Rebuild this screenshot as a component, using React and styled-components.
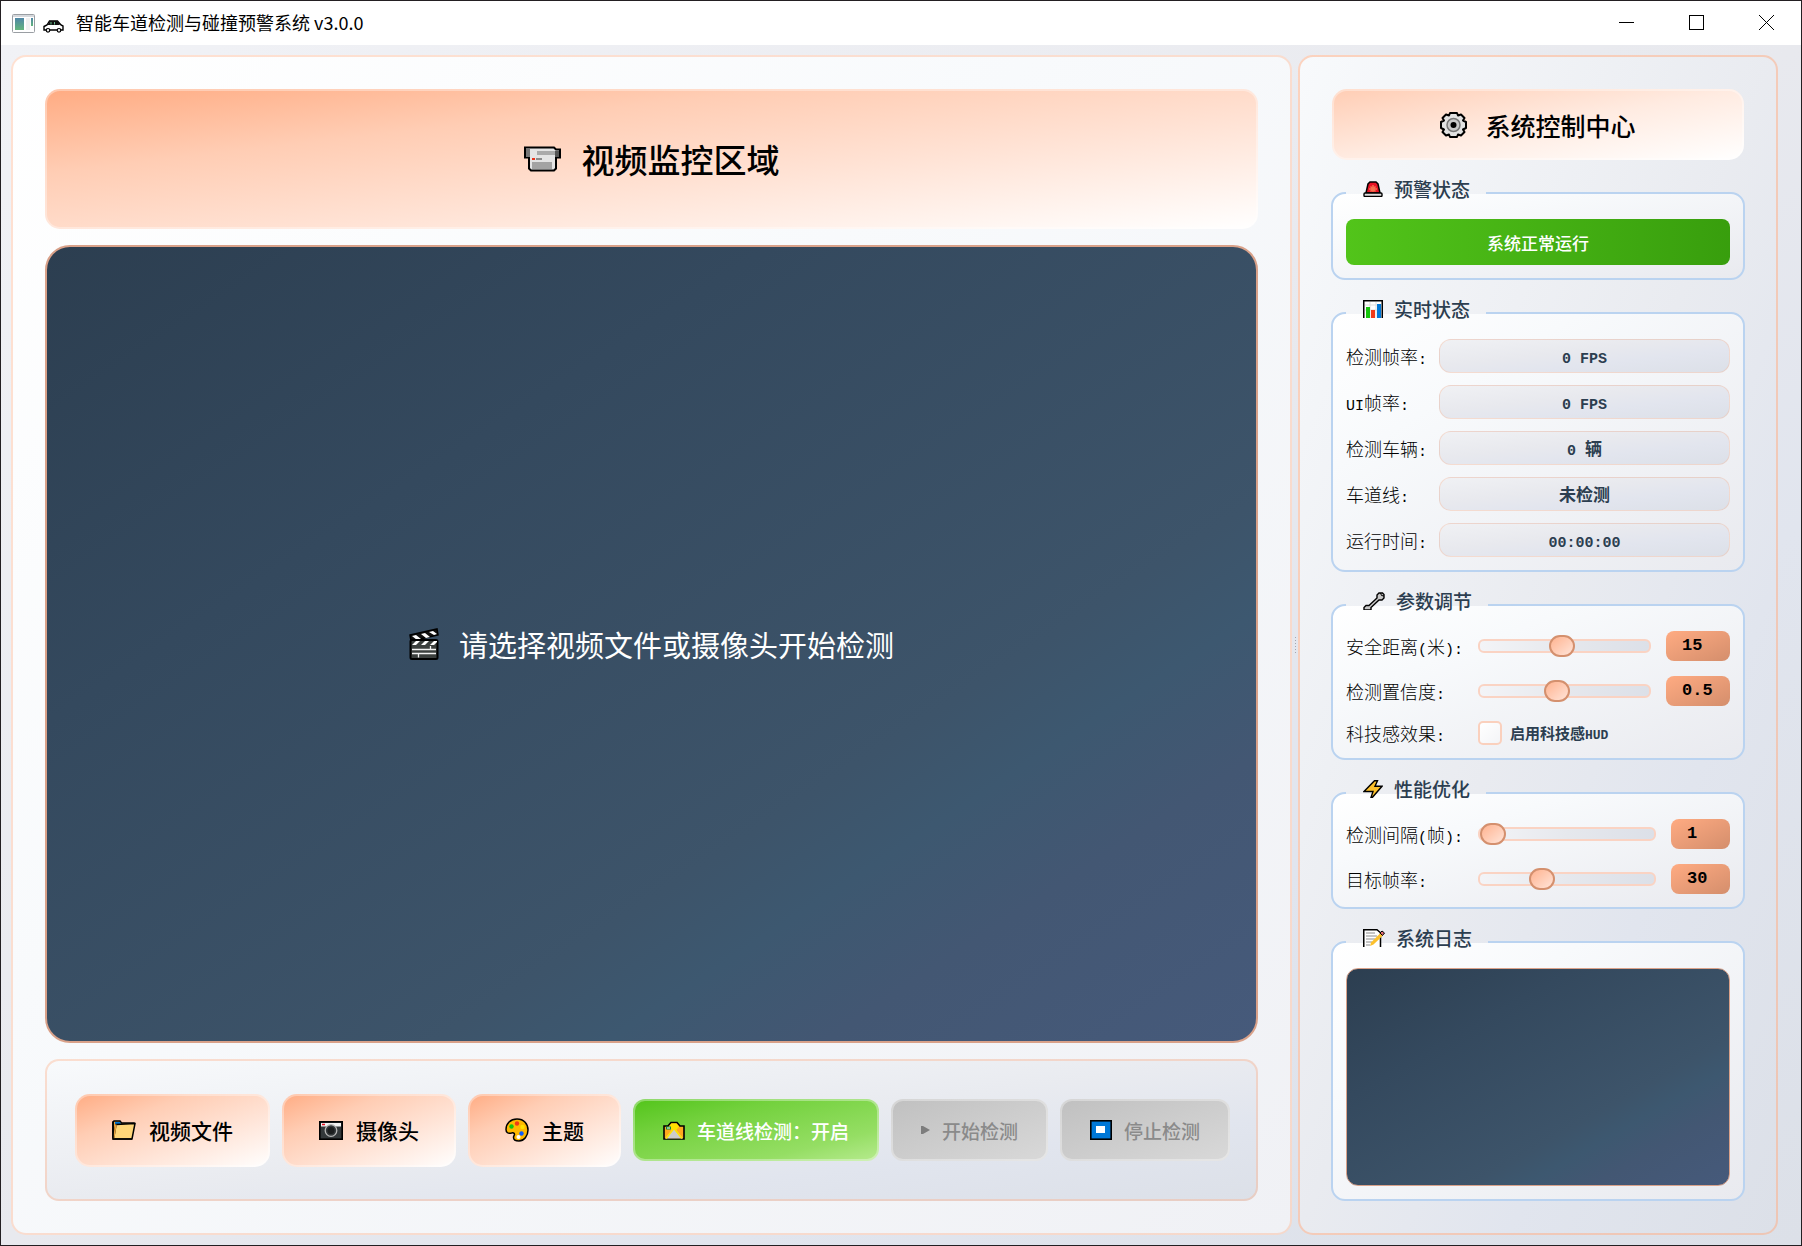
import React, { useState } from "react";
import styled, { createGlobalStyle, css } from "styled-components";

const PEACH = "#ffab82";
const INK = "#2c3e50";
const CJK = '"Noto Sans CJK SC", sans-serif';

const GlobalStyle = createGlobalStyle`
  *, *::before, *::after { box-sizing: border-box; }
  body { margin: 0; font-family: ${CJK}; color: #000; }
  button, input, output { font: inherit; color: inherit; }
`;

const Window = styled.div`
  display: flex;
  flex-direction: column;
  min-height: 100vh;
  border: 1px solid #231f22;
`;

const TitleBar = styled.header`
  display: flex;
  align-items: center;
  height: 44px;
  padding: 0 0 0 11px;
  background: #fff;
`;

const WindowTitle = styled.h1`
  flex: 1;
  margin: 0 0 0 12px;
  padding-bottom: 3px;
  font-size: 18px;
  line-height: 24px;
  font-weight: 400;
`;

const CarSlot = styled.span`
  display: flex;
  margin: 6px 0 0 8px;
`;

const WindowButton = styled.button`
  display: grid;
  place-items: center;
  width: 70px;
  height: 44px;
  padding: 0 0 2px;
  border: 0;
  background: transparent;
`;

const Body = styled.main`
  flex: 1;
  display: grid;
  grid-template-columns: minmax(0, 1fr) 6px 480px;
  padding: 10px 23px 10px 10px;
  background: linear-gradient(to bottom right, #f1f2f6 0%, #e8e9ee 50%, #e1e5ee 70%, #dce0e8 100%);
`;

const Panel = styled.section`
  display: flex;
  flex-direction: column;
  padding: 32px;
  border: 2px solid ${(p) => (p.$side ? "rgba(255,171,130,.5)" : "rgba(255,171,130,.36)")};
  border-radius: 15px;
  background: ${(p) =>
    p.$side
      ? "linear-gradient(to bottom right, #f8fafc 0%, #e9ebf0 50%, #e1e5ee 72%, #dce0e8 100%)"
      : "linear-gradient(to bottom right, #fff 0%, #f8fafc 40%, #f0f1f5 100%)"};
  background-origin: border-box;
`;

const Splitter = styled.div`
  display: flex;
  flex-direction: column;
  align-items: center;
  justify-content: center;
  gap: 2px;
`;

const Dot = styled.span`
  width: 1px;
  height: 1px;
  background: #a4a7b0;
`;

const Banner = styled.h2`
  display: flex;
  align-items: center;
  justify-content: center;
  margin: 0;
  border: 2px solid rgba(255, 255, 255, 0.35);
  border-radius: 15px;
  background-origin: border-box;
  ${(p) =>
    p.$large
      ? css`
          height: 140px;
          gap: 21px;
          font-size: 33px;
          font-weight: 500;
          background-image: linear-gradient(to bottom right, #ffab82 0%, #ffcdb4 30%, #ffe2d4 60%, #fff 100%);
        `
      : css`
          height: 71px;
          gap: 18px;
          font-size: 25px;
          font-weight: 500;
          background-image: linear-gradient(to bottom right, #ffcdb4 0%, #ffebe1 50%, #fff 100%);
        `}
`;

const darkSurface = css`
  background: linear-gradient(to bottom right, #2c3e50 0%, #34495e 30%, #3d546a 66%, #3d5870 73%, #435773 82%, #465a7b 100%);
  background-origin: border-box;
`;

const Screen = styled.div`
  flex: 1;
  display: flex;
  align-items: center;
  justify-content: center;
  gap: 20px;
  min-height: 300px;
  margin: 16px 0;
  border: 2px solid #d9a189;
  border-radius: 25px;
  color: #fff;
  font-size: 29px;
  font-weight: 400;
  ${darkSurface}
`;

const Toolbar = styled.div`
  display: flex;
  align-items: center;
  gap: 12px;
  height: 142px;
  padding: 0 28px;
  border: 2px solid rgba(255, 171, 130, 0.36);
  border-radius: 14px;
  background: linear-gradient(to bottom right, #f8fafc 0%, #e9ebf0 50%, #e1e5ee 72%, #dce0e8 100%);
  background-origin: border-box;
`;

const toolLooks = {
  file: css`
    gap: 13px;
    height: 73px;
    padding: 0 35px;
    border-radius: 15px;
    font-size: 21px;
    background-image: linear-gradient(to bottom right, #ffab82 0%, #ffcdb4 30%, #ffe2d4 60%, #fff 100%);
  `,
  on: css`
    color: #fff;
    background-image: linear-gradient(to bottom right, #52c41a 0%, #73d13d 30%, #95de64 75%, #b7eb8f 100%);
  `,
  off: css`
    color: #8a8a8a;
    background-image: linear-gradient(to bottom right, #c0c0c0, #d9d9d9);
  `,
};

const ToolButton = styled.button`
  flex: 1 1 auto;
  display: flex;
  align-items: center;
  justify-content: center;
  gap: 12px;
  height: 62px;
  padding: 0 28px;
  border: 2px solid rgba(255, 255, 255, 0.35);
  border-radius: 12px;
  background-origin: border-box;
  font-size: 19px;
  font-weight: 500;
  white-space: nowrap;
  ${(p) => toolLooks[p.$look]}
`;

const Group = styled.fieldset`
  display: flex;
  flex-direction: column;
  flex: ${(p) => (p.$fill ? "1" : "none")};
  gap: ${(p) => p.$gap || 0}px;
  min-width: 0;
  margin: 18px -1px 0;
  padding: 11px 13px 13px;
  border: 2px solid #bad3f0;
  border-radius: 14px;
  background: linear-gradient(to bottom right, #fff 0%, #f8fafc 30%, #e9eaef 100%);
`;

const Legend = styled.legend`
  height: 30px;
  padding: 0 16px 8px 17px;
  color: ${INK};
`;

const LegendRow = styled.span`
  display: flex;
  align-items: center;
  gap: 11px;
  font-size: 19px;
  line-height: 22px;
  font-weight: 500;
`;

const Alert = styled.div`
  display: grid;
  place-items: center;
  height: 46px;
  border-radius: 8px;
  background: linear-gradient(to right, #52c41a, #389e0d);
  color: #fff;
  font-size: 17px;
  font-weight: 500;
`;

const Latin = styled.span`
  font-family: "Liberation Mono", monospace;
  font-size: ${(p) => (p.$small ? 13 : 15)}px;
  line-height: 1;
  white-space: pre;
`;

const StatRow = styled.div`
  display: grid;
  grid-template-columns: 81px minmax(0, 1fr);
  gap: 12px;
  align-items: center;
`;

const Label = styled.label`
  font-size: 18px;
  line-height: 24px;
  font-weight: 300;
  white-space: nowrap;
`;

const Pill = styled.output`
  height: 34px;
  border: 1px solid rgba(255, 171, 130, 0.3);
  border-radius: 12px;
  background: linear-gradient(to bottom right, #f0f1f4 0%, #e8e9ee 40%, #e2e5ee 65%, #dce0e8 100%);
  color: ${INK};
  font-size: 17px;
  line-height: 32px;
  font-weight: 700;
  text-align: center;
`;

const ParamRow = styled.div`
  display: grid;
  grid-template-columns: 117px minmax(0, 1fr) auto;
  column-gap: 15px;
  align-items: center;
`;

const Slider = styled.input`
  appearance: none;
  width: 100%;
  height: 22px;
  margin: 0;
  background: transparent;

  &::-webkit-slider-runnable-track {
    height: 14px;
    border: 2px solid #fad3c3;
    border-radius: 6px;
    background: linear-gradient(to right, #f3f4f7, #e6e8ed 50%, #dce0e8);
  }

  &::-webkit-slider-thumb {
    appearance: none;
    width: 26px;
    height: 22px;
    margin-top: -6px;
    border: 2px solid #d4906e;
    border-radius: 11px;
    background: linear-gradient(to bottom right, #ffb390, #ffe4d8);
  }
`;

const Badge = styled.output`
  min-width: ${(p) => (p.$wide ? 64 : 59)}px;
  height: 30px;
  padding: 0 16px;
  border-radius: 8px;
  background: linear-gradient(to bottom right, ${PEACH}, #d48e6c);
  font-family: "Liberation Mono", monospace;
  font-size: 17px;
  line-height: 30px;
  font-weight: 700;
`;

const CheckLabel = styled.label`
  display: flex;
  align-items: center;
  gap: 8px;
  height: 24px;
  color: ${INK};
  font-size: 15px;
  line-height: 24px;
  font-weight: 700;
`;

const CheckBox = styled.input`
  appearance: none;
  width: 24px;
  height: 24px;
  margin: 0;
  border: 2px solid #fad0bd;
  border-radius: 5px;
  background: linear-gradient(to bottom right, #fff, #f3f4f7);

  &:checked { background: ${PEACH}; }
`;

const Log = styled.div`
  flex: 1;
  min-height: 120px;
  border: 1px solid #d9a189;
  border-radius: 12px;
  ${darkSurface}
`;

function Icon({ w, h, box, children }) {
  return (
    <svg width={w} height={h} viewBox={box || `0 0 ${w} ${h}`} fill="none" aria-hidden="true">
      {children}
    </svg>
  );
}

const AppIcon = () => (
  <Icon w={23} h={19}>
    <rect x=".5" y=".5" width="22" height="18" rx="1" fill="#fff" stroke="#9a9ea3" />
    <rect x="1" y="1" width="21" height="2" fill="#d5d8dc" />
    <rect x="3" y="4" width="9" height="12" fill="url(#appFill)" />
    <rect x="14" y="4" width="4" height="12" fill="#f0f0f0" />
    <rect x="19" y="4" width="2" height="8" fill="url(#appFill)" />
    <defs>
      <linearGradient id="appFill" x1="0" y1="0" x2="0" y2="1">
        <stop stopColor="#4f86a6" />
        <stop offset="1" stopColor="#63b57c" />
      </linearGradient>
    </defs>
  </Icon>
);

const CarIcon = () => (
  <Icon w={21} h={13}>
    <path d="M1 6.5 4 5l2.5-4h8L18 5l2 1v4H1z" fill="#fff" stroke="#000" strokeWidth="1.4" />
    <path d="M4.5 5 7 1h7.5L17 5z" fill="#111" />
    <path d="M8 2v2.5M11.5 2v2.5" stroke="#6b8" />
    <circle cx="5" cy="10.3" r="1.8" fill="#eee" stroke="#000" strokeWidth="1.2" />
    <circle cx="16" cy="10.3" r="1.8" fill="#eee" stroke="#000" strokeWidth="1.2" />
  </Icon>
);

const CamcorderIcon = () => (
  <Icon w={37} h={26}>
    <path d="M1 1.5h29l2 2h4v8h-4v11l-2 2H7l-2-2v-11H1z" fill="#e4e4e4" stroke="#000" strokeWidth="2" />
    <path d="M2 3h4v8H2z" fill="#777" />
    <path d="M31 5h4v6h-4z" fill="#555" />
    <path d="M13 5h18v4H13z" fill="#aaa" />
    <path d="M8 16h20v7H8z" fill="#a3a3a3" />
    <path d="M8 13h3" stroke="#e8331c" strokeWidth="2" />
    <path d="M12 13h6" stroke="#8b8b8b" strokeWidth="2" />
  </Icon>
);

const GearIcon = () => (
  <Icon w={27} h={26}>
    <path
      d="M10 1h7l1 2.500 3-1 3.500 3.500-1.500 2.500L26 10v6l-3 1.500 1.500 2.500-3.500 3.500-3-1L17 25h-7l-1-2.500-3 1L2.500 20 4 17.500 1 16v-6l3-1.500L2.500 6 6 2.500l3 1z"
      fill="#e2e2e2"
      stroke="#000"
      strokeWidth="2"
      strokeLinejoin="round"
    />
    <circle cx="13.500" cy="13" r="6.500" fill="#c9c9c9" stroke="#777" strokeWidth="1.500" />
    <circle cx="13.500" cy="13" r="3" fill="#000" />
  </Icon>
);

const SirenIcon = () => (
  <Icon w={20} h={16}>
    <path d="M3 12 5 3l2-2h6l2 2 2 9z" fill="#e81224" stroke="#000" strokeWidth="1.500" />
    <path d="M10 4v7M6 8h8M7.500 5.500l5 5M12.500 5.500l-5 5" stroke="#f5714f" strokeWidth="1.500" />
    <rect x="1" y="12" width="18" height="3.500" rx="1" fill="#ddd" stroke="#000" strokeWidth="1.400" />
  </Icon>
);

const ChartIcon = () => (
  <Icon w={20} h={18}>
    <path d="M.75 18V.75h18.500V18" fill="#fff" stroke="#000" strokeWidth="1.500" />
    <path d="M2 5h16M2 10h16M7 2v16M13 2v16" stroke="#ddd" />
    <path d="M3 7h4v11H3z" fill="#16c60c" />
    <path d="M8 10h4v8H8z" fill="#f03a17" />
    <path d="M14 4h4v14h-4z" fill="#0078d7" />
  </Icon>
);

const WrenchIcon = () => (
  <Icon w={22} h={18}>
    <path
      d="M1 18v-2.500l2-2h3l8-7.500V3L16 1h3.500L21 2.500V6l-2 2h-3l-8 7.500V18z"
      fill="#c8c8c8"
      stroke="#000"
      strokeWidth="1.400"
    />
    <path d="m17.500 1 1 2.500L21 4" stroke="#000" strokeWidth="1" />
  </Icon>
);

const BoltIcon = () => (
  <Icon w={20} h={18}>
    <path d="M11.500.7h3L12 6.300h7L9.500 17.300 8 17.500l2-6H1z" fill="#fcc02c" stroke="#000" strokeWidth="1.400" />
  </Icon>
);

const NoteIcon = () => (
  <Icon w={22} h={18}>
    <path d="M.75 18V.75H14l3.500 3V18" fill="#fff" stroke="#000" strokeWidth="1.500" />
    <path d="M3 4h9M3 7h11M3 10h9M3 13h6M3 16h4" stroke="#8c8c8c" />
    <path d="m7 17 1-3.500L17.500 4l2.500 2.500-9.500 9z" fill="#fcc02c" />
    <path d="m17 4 2-2 2.500 2-2 2.500z" fill="#e06a73" stroke="#000" />
  </Icon>
);

const ClapperIcon = () => (
  <Icon w={30} h={32}>
    <path d="m1 7 27-6 1 6L2 13z" fill="#111" stroke="#000" strokeWidth="1.500" />
    <path d="m3 8 5 4 4-1-5-4zM12 6l5 4 4-1-5-4zM20 4l5 3 3-1-4-3z" fill="#fff" />
    <rect x="1.500" y="12" width="27" height="19" rx="1.500" fill="#3b3f3d" stroke="#000" strokeWidth="2" />
    <path d="m3 17 4-4h4l-4 4zM12 17l4-4h4l-4 4zM21 17l4-4h3v1l-3 3z" fill="#fff" />
    <path d="M3 21.500h24M3 25.500h24M21.500 18v3.500M9.500 26v3.500" stroke="#f2f2f2" strokeWidth="1.300" />
  </Icon>
);

const FolderIcon = () => (
  <Icon w={24} h={20}>
    <path d="M1 18.500V2l1-1h6l1.500 2H22v2" fill="#e8a33d" stroke="#000" strokeWidth="1.600" />
    <path d="M3 2h5l1 2H3z" fill="#0078d7" />
    <path d="M4 4.500 23 3.500 20 19H1.500z" fill="#ffd679" stroke="#000" strokeWidth="1.500" />
    <path d="M4 4.500 1.500 19" stroke="#e8a33d" strokeWidth="1.500" />
    <path d="M1 1.500v17.500h19" stroke="#000" strokeWidth="1.600" />
  </Icon>
);

const CameraIcon = () => (
  <Icon w={24} h={19}>
    <rect x=".8" y=".8" width="22.400" height="17.400" fill="#33383a" stroke="#000" strokeWidth="1.600" />
    <path d="M2 2h20v3.500H2z" fill="#f2f2f2" />
    <path d="M3 3.500h3" stroke="#e81224" strokeWidth="1.500" />
    <circle cx="12" cy="9.500" r="5.800" fill="#33383a" stroke="#b5b5b5" strokeWidth="1.300" />
    <circle cx="12" cy="9.500" r="3.500" fill="#1b1d1e" />
  </Icon>
);

const PaletteIcon = () => (
  <Icon w={24} h={24}>
    <path
      d="M12 1c7 0 11 5 11 11 0 6-4 11-9 11-3.500 0-5.500-1.500-5.500-3.500 0-1.500 1-2 1-3.200C9.500 15 8 14.500 6.500 15 3 16 1 14.500 1 11.500 1 5.500 5.500 1 12 1z"
      fill="#ffb900"
      stroke="#000"
      strokeWidth="1.500"
    />
    <circle cx="6.500" cy="8.500" r="2.200" fill="#16c60c" />
    <circle cx="12" cy="5.500" r="2.200" fill="#f03a17" />
    <circle cx="17.500" cy="9" r="2.200" fill="#ffe100" />
    <circle cx="16.500" cy="15.500" r="2.200" fill="#0b5cff" />
    <circle cx="13.500" cy="19" r="2" fill="#fff" />
  </Icon>
);

const RoadIcon = () => (
  <Icon w={22} h={19}>
    <path d="M1 18V5h4l3-3.500h6L17 5h4v13z" fill="#ffa91f" stroke="#000" strokeWidth="1.600" />
    <path d="M6 5.500 8.500 2.500h5L16 5.500l-3 4H9z" fill="#ffe100" />
    <path d="M2 17.500 9 9h4l7 8.500z" fill="#ccc" />
    <path d="M3 17.500 10.500 8M19 17.500 11.500 8" stroke="#ffe100" strokeWidth="1.600" />
    <path d="M3 7h5" stroke="#10893e" strokeWidth="3" />
    <path d="M4 7h3" stroke="#fff" />
  </Icon>
);

const PlayIcon = () => (
  <Icon w={9} h={8}>
    <path d="M0 0h2l7 4-7 4H0z" fill="#7d7d7d" />
  </Icon>
);

const StopIcon = () => (
  <Icon w={22} h={20}>
    <rect x=".8" y=".8" width="20.400" height="18.400" fill="#0078d7" stroke="#000" strokeWidth="1.600" />
    <rect x="6" y="6" width="9" height="7" fill="#fff" />
  </Icon>
);

/* Half-width runs are set in the monospaced face, Chinese runs in the page face. */
function Mixed({ small, children }) {
  return children
    .split(/([\x20-\x7e]+)/)
    .filter(Boolean)
    .map((part, i) =>
      /^[\x20-\x7e]/.test(part) ? (
        <Latin key={i} $small={small}>
          {part}
        </Latin>
      ) : (
        part
      )
    );
}

function Box({ icon, title, gap, fill, children }) {
  return (
    <Group $gap={gap} $fill={fill}>
      <Legend>
        <LegendRow>
          {icon}
          {title}
        </LegendRow>
      </Legend>
      {children}
    </Group>
  );
}

function Param({ id, label, min, max, step = 1, initial, wide }) {
  const [value, setValue] = useState(initial);
  return (
    <ParamRow>
      <Label htmlFor={id}>
        <Mixed>{label}</Mixed>
      </Label>
      <Slider id={id} type="range" min={min} max={max} step={step} value={value} onChange={(e) => setValue(e.target.value)} />
      <Badge htmlFor={id} $wide={wide}>
        {value}
      </Badge>
    </ParamRow>
  );
}

const stats = [
  ["fps", "检测帧率:", "0 FPS"],
  ["ui-fps", "UI帧率:", "0 FPS"],
  ["vehicles", "检测车辆:", "0 辆"],
  ["lane", "车道线:", "未检测"],
  ["uptime", "运行时间:", "00:00:00"],
];

export default function App() {
  return (
    <Window>
      <GlobalStyle />
      <TitleBar>
        <AppIcon />
        <CarSlot>
          <CarIcon />
        </CarSlot>
        <WindowTitle>智能车道检测与碰撞预警系统 v3.0.0</WindowTitle>
        <WindowButton aria-label="最小化">
          <Icon w={15} h={15}>
            <path d="M0 7.500h15" stroke="#000" />
          </Icon>
        </WindowButton>
        <WindowButton aria-label="最大化">
          <Icon w={15} h={15}>
            <rect x=".5" y=".5" width="14" height="14" stroke="#000" />
          </Icon>
        </WindowButton>
        <WindowButton aria-label="关闭">
          <Icon w={15} h={15}>
            <path d="m0 0 15 15M15 0 0 15" stroke="#000" />
          </Icon>
        </WindowButton>
      </TitleBar>

      <Body>
        <Panel>
          <Banner $large>
            <CamcorderIcon />
            视频监控区域
          </Banner>
          <Screen>
            <ClapperIcon />
            请选择视频文件或摄像头开始检测
          </Screen>
          <Toolbar>
            <ToolButton $look="file">
              <FolderIcon />
              视频文件
            </ToolButton>
            <ToolButton $look="file">
              <CameraIcon />
              摄像头
            </ToolButton>
            <ToolButton $look="file">
              <PaletteIcon />
              主题
            </ToolButton>
            <ToolButton $look="on">
              <RoadIcon />
              车道线检测：开启
            </ToolButton>
            <ToolButton $look="off" disabled>
              <PlayIcon />
              开始检测
            </ToolButton>
            <ToolButton $look="off" disabled>
              <StopIcon />
              停止检测
            </ToolButton>
          </Toolbar>
        </Panel>

        <Splitter>
          {[0, 1, 2, 3, 4, 5].map((n) => (
            <Dot key={n} />
          ))}
        </Splitter>

        <Panel $side>
          <Banner>
            <GearIcon />
            系统控制中心
          </Banner>

          <Box icon={<SirenIcon />} title="预警状态">
            <Alert role="status">系统正常运行</Alert>
          </Box>

          <Box icon={<ChartIcon />} title="实时状态" gap={12}>
            {stats.map(([id, label, value]) => (
              <StatRow key={id}>
                <Label htmlFor={id}>
                  <Mixed>{label}</Mixed>
                </Label>
                <Pill id={id}>
                  <Mixed>{value}</Mixed>
                </Pill>
              </StatRow>
            ))}
          </Box>

          <Box icon={<WrenchIcon />} title="参数调节" gap={15}>
            <Param id="distance" label="安全距离(米):" min={1} max={30} initial={15} wide />
            <Param id="confidence" label="检测置信度:" min={0.1} max={1} step={0.1} initial={0.5} wide />
            <ParamRow>
              <Label htmlFor="hud">
                <Mixed>科技感效果:</Mixed>
              </Label>
              <CheckLabel>
                <CheckBox id="hud" type="checkbox" />
                <span>
                  <Mixed small>启用科技感HUD</Mixed>
                </span>
              </CheckLabel>
            </ParamRow>
          </Box>

          <Box icon={<BoltIcon />} title="性能优化" gap={15}>
            <Param id="interval" label="检测间隔(帧):" min={1} max={10} initial={1} />
            <Param id="target" label="目标帧率:" min={15} max={60} initial={30} />
          </Box>

          <Box icon={<NoteIcon />} title="系统日志" fill>
            <Log role="log" aria-label="系统日志" />
          </Box>
        </Panel>
      </Body>
    </Window>
  );
}
